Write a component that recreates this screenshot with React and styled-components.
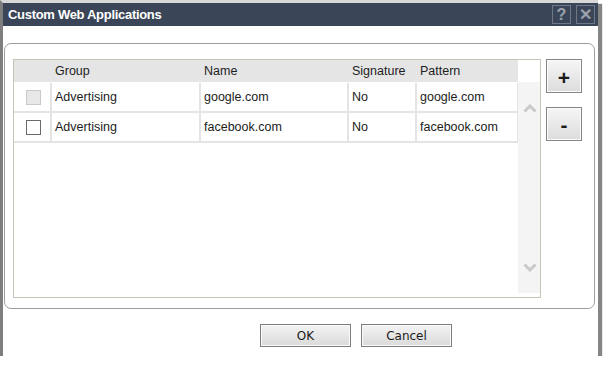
import React from "react";
import styled, { createGlobalStyle } from "styled-components";

const GlobalStyle = createGlobalStyle`
  html, body { margin: 0; padding: 0; background: #ffffff; }
  body { font-family: "Liberation Sans", Arial, sans-serif; }
  * { box-sizing: border-box; }
`;

const Window = styled.div`
  width: 598px;
  height: 356px;
  border-left: 3px solid #7e7e7e;
  border-top: 3px solid #d8d8d8;
  background: #ffffff;
  box-shadow: 4px 4px 1px #858585;
  display: flex;
  flex-direction: column;
`;

const TitleBar = styled.div`
  height: 23px;
  background: #3a4557;
  display: flex;
  align-items: center;
  padding: 0 3px 0 5px;
`;

const Title = styled.div`
  flex: 1;
  color: #ffffff;
  font-weight: bold;
  font-size: 13px;
  letter-spacing: -0.3px;
  margin-top: -1px;
`;

const TitleButton = styled.div`
  width: 19px;
  height: 19px;
  margin-left: 5px;
  border: 1px solid #6e7888;
  color: #9aa2ad;
  font-weight: bold;
  font-size: 16px;
  display: flex;
  align-items: center;
  justify-content: center;
  line-height: 1;
`;

const Body = styled.div`
  flex: 1;
  display: flex;
  flex-direction: column;
  padding-top: 17px;
`;

const GroupBox = styled.div`
  height: 266px;
  margin: 0 3px 0 1px;
  border: 1px solid #9e9e9e;
  border-radius: 7px;
  display: flex;
  align-items: flex-start;
  padding: 15px 0 0 8px;
`;

const TableFrame = styled.div`
  width: 528px;
  height: 239px;
  border: 1px solid #c9c4b8;
  display: flex;
`;

const Grid = styled.div`
  width: 504px;
  display: flex;
  flex-direction: column;
`;

const columns = "38px 149px 148px 68px 101px";

const HeaderRow = styled.div`
  display: grid;
  grid-template-columns: ${columns};
  height: 22px;
  background: #e5e5e5;
`;

const HeaderCell = styled.div`
  padding-left: 3px;
  font-size: 12.5px;
  color: #1e1e1e;
  display: flex;
  align-items: center;
`;

const DataRow = styled.div`
  display: grid;
  grid-template-columns: ${columns};
  height: 30px;
  border-bottom: 2px solid #e4e4e4;
  margin-top: ${(p) => (p.$first ? "1px" : "0")};
`;

const Cell = styled.div`
  background: #ffffff;
  border-right: ${(p) => (p.$last ? "1px" : "2px")} solid #e4e4e4;
  padding-left: 3px;
  font-size: 12.5px;
  color: #1c1c1c;
  display: flex;
  align-items: center;
`;

const CheckCell = styled(Cell)`
  padding-left: 12px;
`;

const Checkbox = styled.div`
  width: 15px;
  height: 15px;
  border: 1px solid ${(p) => (p.$disabled ? "#c9c9c9" : "#6a6a6a")};
  background: ${(p) => (p.$disabled ? "#e7e7e7" : "#ffffff")};
`;

const ScrollColumn = styled.div`
  width: 22px;
  display: flex;
  flex-direction: column;
`;

const ScrollTrack = styled.div`
  margin-top: 22px;
  height: 211px;
  background: #f4f4f4;
  display: flex;
  flex-direction: column;
  align-items: center;
  justify-content: space-between;
  padding: 22px 0 21px 1px;
`;

const SideButtons = styled.div`
  margin-left: 5px;
  display: flex;
  flex-direction: column;
  gap: 14px;
`;

const SquareButton = styled.div`
  width: 36px;
  height: 34px;
  border: 1px solid #858585;
  background: linear-gradient(#f6f6f6, #dcdcdc);
  box-shadow: inset 0 0 0 1px #fbfbfb;
  display: flex;
  align-items: center;
  justify-content: center;
  font-weight: bold;
  font-size: 21px;
  color: #1a1a1a;
  padding-top: ${(p) => p.$pt || 0}px;
`;

const Footer = styled.div`
  display: flex;
  gap: 10px;
  padding: 15px 0 0 257px;
`;

const DialogButton = styled.div`
  width: 91px;
  height: 23px;
  border: 1px solid #7d7d7d;
  background: linear-gradient(#f3f3f3, #dadada);
  box-shadow: inset 0 0 0 1px #fafafa;
  font-family: "DejaVu Sans", Verdana, sans-serif;
  font-size: 12px;
  color: #1a1a1a;
  display: flex;
  align-items: center;
  justify-content: center;
`;

const Chevron = ({ up }) => (
  <svg width="14" height="9" viewBox="0 0 14 9">
    <path
      d={up ? "M1.5 7.5 L7 2 L12.5 7.5" : "M1.5 1.5 L7 7 L12.5 1.5"}
      fill="none"
      stroke="#c9c9c9"
      strokeWidth="3"
    />
  </svg>
);

const rows = [
  { group: "Advertising", name: "google.com", sig: "No", pattern: "google.com", disabled: true },
  { group: "Advertising", name: "facebook.com", sig: "No", pattern: "facebook.com", disabled: false },
];

export default function App() {
  return (
    <>
      <GlobalStyle />
      <Window>
        <TitleBar>
          <Title>Custom Web Applications</Title>
          <TitleButton>?</TitleButton>
          <TitleButton>✕</TitleButton>
        </TitleBar>
        <Body>
          <GroupBox>
            <TableFrame>
              <Grid>
                <HeaderRow>
                  <HeaderCell />
                  <HeaderCell>Group</HeaderCell>
                  <HeaderCell>Name</HeaderCell>
                  <HeaderCell>Signature</HeaderCell>
                  <HeaderCell>Pattern</HeaderCell>
                </HeaderRow>
                {rows.map((r, i) => (
                  <DataRow key={i} $first={i === 0}>
                    <CheckCell>
                      <Checkbox $disabled={r.disabled} />
                    </CheckCell>
                    <Cell>{r.group}</Cell>
                    <Cell>{r.name}</Cell>
                    <Cell>{r.sig}</Cell>
                    <Cell $last>{r.pattern}</Cell>
                  </DataRow>
                ))}
              </Grid>
              <ScrollColumn>
                <ScrollTrack>
                  <Chevron up />
                  <Chevron />
                </ScrollTrack>
              </ScrollColumn>
            </TableFrame>
            <SideButtons>
              <SquareButton $pt={3}>+</SquareButton>
              <SquareButton $pt={2}>-</SquareButton>
            </SideButtons>
          </GroupBox>
          <Footer>
            <DialogButton>OK</DialogButton>
            <DialogButton>Cancel</DialogButton>
          </Footer>
        </Body>
      </Window>
    </>
  );
}
